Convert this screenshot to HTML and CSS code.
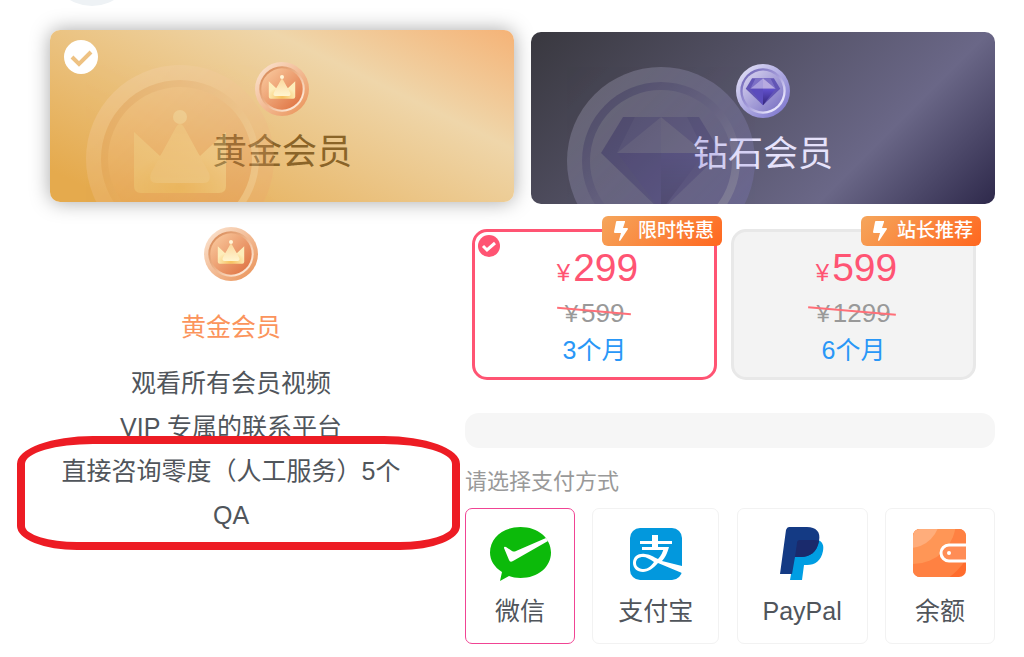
FILE: index.html
```html
<!DOCTYPE html>
<html lang="zh-CN">
<head>
  <meta charset="UTF-8" />
  <meta name="viewport" content="width=device-width, initial-scale=1.0" />
  <title>开通会员</title>
  <link rel="stylesheet" href="styles.css">
</head>
<body>

  <!-- Shared icons -->
  <svg class="icon-defs" aria-hidden="true">
    <defs>
      <linearGradient id="gold-rim" x1="0" y1="0" x2="1" y2="1">
        <stop offset="0.1" stop-color="#fae0cb" />
        <stop offset="0.9" stop-color="#eb975f" />
      </linearGradient>
      <linearGradient id="gold-ring" x1="0" y1="0" x2="1" y2="1">
        <stop offset="0.1" stop-color="#d98d5c" />
        <stop offset="0.5" stop-color="#eeb58c" />
        <stop offset="0.8" stop-color="#fce4d0" />
      </linearGradient>
      <linearGradient id="gold-face" x1="0" y1="0" x2="1" y2="1">
        <stop offset="0" stop-color="#fbcfa4" />
        <stop offset="1" stop-color="#dd6c3b" />
      </linearGradient>
      <radialGradient id="crown-base" cx="0.5" cy="0.9" r="0.7">
        <stop offset="0" stop-color="#f7c15e" />
        <stop offset="0.8" stop-color="#fdedba" />
      </radialGradient>
      <linearGradient id="crown-front" x1="0" y1="0" x2="0" y2="1">
        <stop offset="0" stop-color="#fbd89e" />
        <stop offset="1" stop-color="#fff5cf" />
      </linearGradient>
      <linearGradient id="gem-rim" x1="0" y1="0" x2="1" y2="1">
        <stop offset="0.1" stop-color="#dedcf5" />
        <stop offset="0.9" stop-color="#8079cf" />
      </linearGradient>
      <linearGradient id="gem-ring" x1="0" y1="0" x2="1" y2="1">
        <stop offset="0.1" stop-color="#7369b8" />
        <stop offset="0.5" stop-color="#a49cda" />
        <stop offset="0.8" stop-color="#e5e2fb" />
      </linearGradient>
      <linearGradient id="gem-face" x1="0" y1="0" x2="1" y2="1">
        <stop offset="0" stop-color="#dcd8f2" />
        <stop offset="1" stop-color="#746bc0" />
      </linearGradient>
      <linearGradient id="gem-right" x1="0" y1="0" x2="0" y2="1">
        <stop offset="0" stop-color="#6251cf" />
        <stop offset="1" stop-color="#322477" />
      </linearGradient>
    </defs>

    <symbol id="icon-gold" viewBox="0 0 188 188">
      <circle cx="94" cy="94" r="94" fill="url(#gold-rim)" />
      <circle cx="94" cy="94" r="79" fill="url(#gold-ring)" />
      <circle cx="94" cy="94" r="72" fill="url(#gold-face)" />
      <path d="M48 67 L74 91 L94 70 L114 91 L140 67 V121 Q140 128 133 128 H55 Q48 128 48 121 Z" fill="url(#crown-base)" />
      <path d="M89 64 Q94 54 99 64 L123 108 Q126 118 117 118 H71 Q62 118 65 108 Z" fill="url(#crown-front)" />
      <circle cx="94" cy="52" r="7" fill="#fff5d6" />
    </symbol>

    <symbol id="icon-gem" viewBox="0 0 188 188">
      <circle cx="94" cy="94" r="94" fill="url(#gem-rim)" />
      <circle cx="94" cy="94" r="79" fill="url(#gem-ring)" />
      <circle cx="94" cy="94" r="71" fill="url(#gem-face)" />
      <path d="M56 50 H132 L154 86 L94 144 L34 86 Z" fill="#6255b5" />
      <path d="M68 50 H94 L50 86 Z M120 50 H94 L138 86 Z" fill="#7c70c6" />
      <path d="M94 50 L50 86 H94 Z" fill="#a89edd" />
      <path d="M94 50 L138 86 H94 Z" fill="#b7abe0" />
      <path d="M50 86 H94 V144 Z" fill="#5b4cbd" />
      <path d="M94 86 H138 L94 144 Z" fill="url(#gem-right)" />
    </symbol>

    <symbol id="icon-bolt" viewBox="0 0 14 20">
      <path d="M3 0 H11 Q11 0 11 1 L9 7 H13 Q14 7 14 8 L6 20 Q5 20 5 19 L7 12 H1 Q0 12 0 11 L2 1 Q2 0 3 0 Z" fill="#fff" />
    </symbol>
  </svg>

  <main class="page">
    <div class="avatar"></div>

    <div class="levels">
      <button type="button" class="level level-gold active" aria-pressed="true">
        <svg class="coin"><use href="#icon-gold" /></svg>
        <span>黄金会员</span>
        <svg class="watermark"><use href="#icon-gold" /></svg>
        <svg class="level-check" viewBox="0 0 34 34">
          <circle cx="17" cy="17" r="17" fill="#fff" />
          <path d="M8 17 L15 24 L27 12" fill="none" stroke="#eec283" stroke-width="4" />
        </svg>
      </button>
      <button type="button" class="level level-gem" aria-pressed="false">
        <svg class="coin"><use href="#icon-gem" /></svg>
        <span>钻石会员</span>
        <svg class="watermark"><use href="#icon-gem" /></svg>
      </button>
    </div>

    <div class="content">
      <section class="benefits">
        <svg class="coin"><use href="#icon-gold" /></svg>
        <h2>黄金会员</h2>
        <ul>
          <li>观看所有会员视频</li>
          <li>VIP 专属的联系平台</li>
          <li class="marked">直接咨询零度（人工服务）5个QA</li>
        </ul>
      </section>

      <section class="checkout">
        <div class="plans">
          <button type="button" class="plan active" aria-pressed="true">
            <svg class="plan-check" viewBox="0 0 22 22">
              <circle cx="11" cy="11" r="11" fill="#ff5473" />
              <path d="M5 11 L9 15 L17 8" fill="none" stroke="#fff" stroke-width="3" />
            </svg>
            <span class="tag"><svg><use href="#icon-bolt" /></svg>限时特惠</span>
            <span class="price"><small>¥</small>299</span>
            <s class="old-price"><small>¥</small>599</s>
            <span class="period">3个月</span>
          </button>
          <button type="button" class="plan" aria-pressed="false">
            <span class="tag"><svg><use href="#icon-bolt" /></svg>站长推荐</span>
            <span class="price"><small>¥</small>599</span>
            <s class="old-price"><small>¥</small>1299</s>
            <span class="period">6个月</span>
          </button>
        </div>

        <div class="notice"></div>

        <p class="pay-label">请选择支付方式</p>
        <div class="payments">
          <button type="button" class="payment active" aria-pressed="true">
            <svg width="61" height="54" viewBox="0 0 61 54">
              <path d="M30.500 0 C48 0 61 11 61 25.500 C61 40 48 51 30.500 51 C26 51 22 50 19 49 L10 54 L12 45 C4 40 0 33 0 25.500 C0 11 13 0 30.500 0 Z" fill="#0cba0a" />
              <path d="M14 21 Q14 19 16 20 L22 24 Q24 25 26 24 L56 11 L58 14 L23 34 Q20 36 19 33 Z" fill="#fff" />
            </svg>
            <span>微信</span>
          </button>
          <button type="button" class="payment" aria-pressed="false">
            <svg width="52" height="54" viewBox="0 0 52 54">
              <rect y="1" width="52" height="52" rx="10" fill="#0298dd" />
              <path d="M10 15.500 H42 M12 21.500 H38" fill="none" stroke="#fff" stroke-width="3" />
              <path d="M25 8 V22" fill="none" stroke="#fff" stroke-width="6" />
              <path d="M34 20 H39 C37 27 35 31 32 34 L52 39 V46 L28 36 C24 41 18 45 13 45 C7 45 3 41 3 36 C3 29 9 26 15 27 C19 27 24 30 28 32 C31 29 33 25 34 20 Z M24 35 C20 32 16 30 13 30 C9 30 6 32 6 36 C6 40 10 42 14 42 C18 42 21 39 24 35 Z" fill="#fff" fill-rule="evenodd" />
            </svg>
            <span>支付宝</span>
          </button>
          <button type="button" class="payment" aria-pressed="false">
            <svg width="44" height="54" viewBox="0 0 44 54">
              <path d="M17 13 H38 C43 15 44 19 43 24 C41 34 35 38 27 38 H24 L22 53 H10 Z" fill="#009ee3" />
              <path d="M9 0 H27 C36 0 41 5 39 14 C37 25 30 30 21 30 H15 L12 47 H0 L6 3 Q7 0 9 0 Z" fill="#143a84" />
              <path d="M17 16 Q17 13 20 13 H33 Q37 13 39 14 C37 25 30 30 21 30 H15 Z" fill="#1a2a6c" />
            </svg>
            <span>PayPal</span>
          </button>
          <button type="button" class="payment" aria-pressed="false">
            <svg width="54" height="54" viewBox="0 0 54 54">
              <clipPath id="wallet"><rect y="2" width="53" height="48" rx="7" /></clipPath>
              <g clip-path="url(#wallet)">
                <rect width="54" height="54" fill="#ff6c2d" />
                <circle cx="0" cy="0" r="62" fill="#ff8142" />
                <circle cx="0" cy="-6" r="43" fill="#ff9656" />
                <circle cx="-4" cy="-10" r="31" fill="#ffad7b" />
                <path d="M56 18 H36 a8 8 0 0 0 0 16 H56" fill="#ff8d56" stroke="#fff" stroke-width="3" />
                <circle cx="36" cy="26" r="2" fill="#fff" />
              </g>
            </svg>
            <span>余额</span>
          </button>
        </div>
      </section>
    </div>
  </main>

</body>
</html>
```
FILE: styles.css
```css
* {
  box-sizing: border-box;
}

body {
  margin: 0;
  background: #fff;
  color: #50555b;
  font-family: "Liberation Sans", "Noto Sans CJK SC", sans-serif;
  font-size: 25px;
}

button {
  padding: 0;
  border: none;
  background: none;
  color: inherit;
  font: inherit;
  cursor: pointer;
}

h2, p, ul {
  margin: 0;
  padding: 0;
}

.icon-defs {
  position: absolute;
  width: 0;
  height: 0;
}

.page {
  padding: 0 29px 12px 50px;
  overflow: hidden;
}

.avatar {
  width: 86px;
  height: 86px;
  margin: -80px 0 26px -1px;
  border-radius: 50%;
  background: #eef2f5;
}

.coin {
  display: block;
  width: 54px;
  height: 54px;
}

/* Membership levels */
.levels {
  display: grid;
  grid-template-columns: 1fr 1fr;
  gap: 17px;
}

.level {
  position: relative;
  display: flex;
  flex-direction: column;
  align-items: center;
  gap: 11px;
  height: 172px;
  padding-top: 32px;
  border-radius: 10px;
  overflow: hidden;
  font-size: 35px;
  line-height: 50px;
}

.level-gold {
  background: linear-gradient(26deg, #e5aa4d 8%, #efd6aa 70%, #f5b377);
  color: #8a6428;
}

.level-gem {
  background: linear-gradient(135deg, #39383f, #6a6787 72%, #2e294b);
  color: #e6e2fb;
}

.level.active {
  transform: translateY(-2px);
  box-shadow: 0 0 20px rgba(0, 0, 0, 0.35);
}

.watermark {
  position: absolute;
  top: 35px;
  left: 36px;
  width: 188px;
  height: 188px;
  opacity: 0.22;
}

.level-check {
  position: absolute;
  top: 10px;
  left: 14px;
  width: 34px;
  height: 34px;
}

/* Two columns under the levels */
.content {
  display: grid;
  grid-template-columns: 362fr 530fr;
  gap: 53px;
}

.benefits {
  display: flex;
  flex-direction: column;
  align-items: center;
  padding-top: 23px;
  line-height: 44px;
  text-align: center;
}

.benefits h2 {
  margin: 24px 0 12px;
  color: #fb945c;
  font-size: 25px;
  font-weight: normal;
}

.benefits ul {
  width: 100%;
  list-style: none;
}

.marked {
  position: relative;
}

.marked::after {
  content: "";
  position: absolute;
  inset: -13px -48px -13px -33px;
  border: 8px solid #ed1c24;
  border-radius: 76px 76px 60px 60px / 28px 28px 24px 24px;
  pointer-events: none;
}

.checkout {
  padding-top: 25px;
}

/* Price plans */
.plans {
  display: grid;
  grid-template-columns: 1fr 1fr;
  gap: 14px;
  margin: 0 19px 0 7px;
}

.plan {
  position: relative;
  display: flex;
  flex-direction: column;
  align-items: center;
  padding: 16px 0 9px;
  border: 3px solid #e8e8e8;
  border-radius: 15px;
  background: #f3f3f3;
  line-height: 36px;
}

.plan.active {
  border-color: #ff5473;
  background: #fff;
}

.plan-check {
  position: absolute;
  top: 3px;
  left: 3px;
  width: 22px;
  height: 22px;
}

.tag {
  position: absolute;
  top: -16px;
  right: -8px;
  display: flex;
  align-items: center;
  gap: 10px;
  height: 30px;
  padding: 0 8px 0 12px;
  border-radius: 6px;
  background: linear-gradient(135deg, #f5a65c, #ff671f);
  color: #fff;
  font-size: 19px;
  font-weight: 500;
}

.tag svg {
  width: 14px;
  height: 20px;
}

.price {
  padding-left: 6px;
  color: #ff5473;
  font-size: 39px;
  line-height: 40px;
}

.plan small {
  margin-right: 3px;
  font-size: 24px;
}

.old-price {
  position: relative;
  margin-top: 2px;
  color: #999;
  font-size: 26px;
  text-decoration: none;
}

.old-price::after {
  content: "";
  position: absolute;
  top: 15px;
  left: -8px;
  right: -6px;
  height: 2px;
  background: #ff6f78;
  transform: rotate(5deg);
}

.period {
  color: #2997f7;
}

.notice {
  height: 35px;
  margin-top: 33px;
  border-radius: 14px;
  background: #f6f6f6;
}

/* Payment methods */
.pay-label {
  margin: 17px 0 9px;
  color: #999;
  font-size: 22px;
  line-height: 34px;
}

.payments {
  display: flex;
  justify-content: space-between;
}

.payment {
  display: flex;
  flex-direction: column;
  align-items: center;
  gap: 12px;
  min-width: 110px;
  padding: 18px 25px 14px;
  border: 1px solid #f2f2f2;
  border-radius: 7px;
  line-height: 36px;
}

.payment svg {
  margin: 0 -3px;
}

.payment.active {
  border-color: #f04494;
}
```
